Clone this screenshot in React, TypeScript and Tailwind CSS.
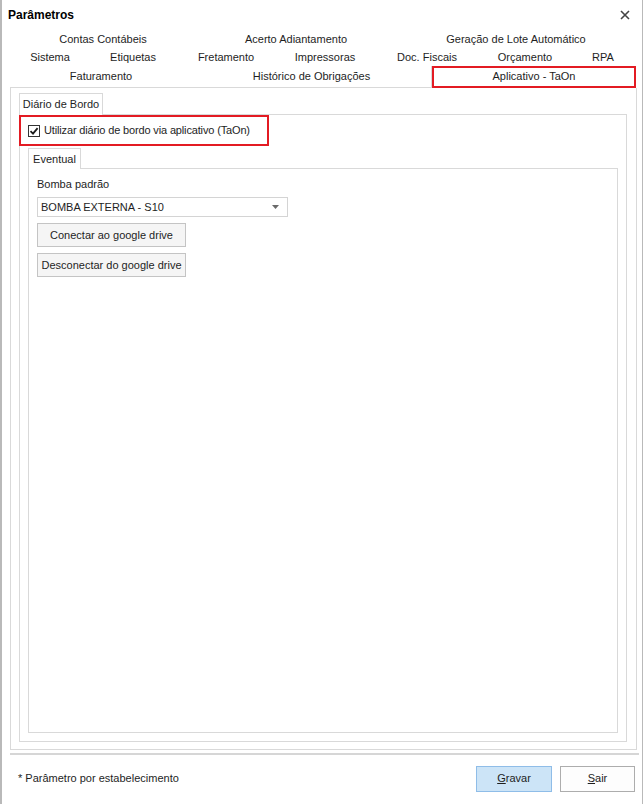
import React from 'react'

const row1 = [
  { label: 'Contas Contábeis', w: 186 },
  { label: 'Acerto Adiantamento', w: 200 },
  { label: 'Geração de Lote Automático', w: 240 },
]

const row2 = [
  { label: 'Sistema', w: 80 },
  { label: 'Etiquetas', w: 86 },
  { label: 'Fretamento', w: 100 },
  { label: 'Impressoras', w: 98 },
  { label: 'Doc. Fiscais', w: 106 },
  { label: 'Orçamento', w: 90 },
  { label: 'RPA', w: 66 },
]

function CheckIcon() {
  return (
    <svg width="10" height="10" viewBox="0 0 10 10" fill="none">
      <path d="M1.5 5.2 L4 7.6 L8.6 2.2" stroke="#1b1b1b" strokeWidth="1.8" />
    </svg>
  )
}

export default function App() {
  return (
    <div className="w-[643px] h-[804px] bg-white flex flex-col border-l-2 border-r border-[#b9b9b9] font-['Liberation_Sans',Arial,sans-serif] text-[11px] text-[#1e1e1e] whitespace-nowrap">
      {/* title bar */}
      <div className="h-[30px] flex items-center justify-between pl-[6px] pr-[12px]">
        <span className="text-[12px] font-bold text-black">Parâmetros</span>
        <svg width="10" height="10" viewBox="0 0 10 10">
          <path d="M1 1 L9 9 M9 1 L1 9" stroke="#444" strokeWidth="1.6" />
        </svg>
      </div>

      {/* tab rows */}
      <div className="pl-[8px] flex flex-col">
        <div className="h-[18px] flex">
          {row1.map((t) => (
            <div key={t.label} style={{ width: t.w }} className="flex items-center justify-center">
              {t.label}
            </div>
          ))}
        </div>
        <div className="h-[18px] flex">
          {row2.map((t) => (
            <div key={t.label} style={{ width: t.w }} className="flex items-center justify-center">
              {t.label}
            </div>
          ))}
        </div>
        <div className="h-[22px] flex">
          <div className="w-[182px] flex items-center justify-center border-b border-[#d9d9d9]">Faturamento</div>
          <div className="w-[240px] flex items-center justify-center border-b border-r border-[#d9d9d9]">
            Histórico de Obrigações
          </div>
          <div className="w-[204px] flex items-center justify-center border-2 border-[#e31b23] pb-[2px]">
            Aplicativo - TaOn
          </div>
        </div>
      </div>

      {/* main panel */}
      <div className="ml-[8px] mr-[5px] h-[662px] border-x border-b border-[#d9d9d9] pt-[5px] pl-[8px] pr-[9px] pb-[7px] flex flex-col">
        <div className="flex">
          <div className="w-[84px] h-[22px] border-x border-t border-[#d9d9d9] flex items-center justify-center">
            Diário de Bordo
          </div>
          <div className="flex-1 border-b border-[#d9d9d9]" />
        </div>
        <div className="flex-1 border-x border-b border-[#d9d9d9] flex flex-col pb-[8px] pr-[8px]">
          <div className="w-[250px] h-[31px] -ml-px border-2 border-[#e31b23] flex items-center pl-[7px] gap-[4px]">
            <div className="w-[12px] h-[12px] border border-[#333] bg-white flex items-center justify-center">
              <CheckIcon />
            </div>
            <span className="tracking-[-0.15px]">Utilizar diário de bordo via aplicativo (TaOn)</span>
          </div>
          <div className="flex mt-[2px] pl-[8px]">
            <div className="w-[53px] h-[21px] border-x border-t border-[#d9d9d9] flex items-center justify-center">
              Eventual
            </div>
            <div className="flex-1 border-b border-[#d9d9d9]" />
          </div>
          <div className="flex-1 ml-[8px] border-x border-b border-[#d9d9d9] pt-[8px] pl-[8px] flex flex-col items-start">
            <span className="h-[14px] leading-[14px]">Bomba padrão</span>
            <div className="mt-[6px] w-[251px] h-[20px] border border-[#d4d4d4] flex items-center justify-between pl-[3px] pr-[8px]">
              <span>BOMBA EXTERNA - S10</span>
              <svg width="7" height="4" viewBox="0 0 7 4">
                <path d="M0 0 L7 0 L3.5 4 Z" fill="#6a6a6a" />
              </svg>
            </div>
            <button className="mt-[6px] w-[149px] h-[24px] border border-[#c4c4c4] bg-[#f5f5f5] flex items-center justify-center">
              Conectar ao google drive
            </button>
            <button className="mt-[6px] w-[149px] h-[24px] border border-[#c4c4c4] bg-[#f5f5f5] flex items-center justify-center">
              Desconectar do google drive
            </button>
          </div>
        </div>
      </div>

      <div className="mt-[2px] ml-[8px] mr-[3px] h-[3px] border-b-2 border-[#d6d6d6]" />

      {/* footer */}
      <div className="flex-1 flex items-center justify-between pl-[16px] pr-[7px] pb-[2px]">
        <span>* Parâmetro por estabelecimento</span>
        <div className="flex gap-[8px]">
          <button className="w-[76px] h-[26px] bg-[#cce4f7] border border-[#8fbde8] flex items-center justify-center">
            <span><span className="underline">G</span>ravar</span>
          </button>
          <button className="w-[75px] h-[26px] bg-[#fdfdfd] border border-[#adadad] flex items-center justify-center">
            <span><span className="underline">S</span>air</span>
          </button>
        </div>
      </div>
    </div>
  )
}
